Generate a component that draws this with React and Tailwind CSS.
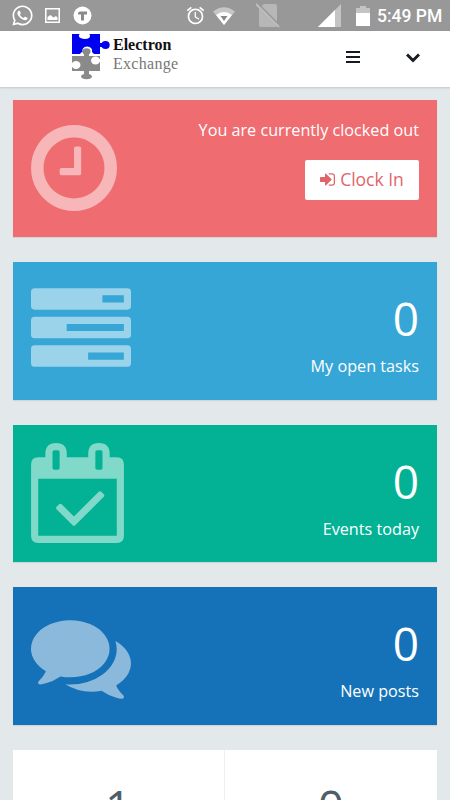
import React from "react";
import { FaWhatsapp } from "react-icons/fa";
import { MdAccessAlarm } from "react-icons/md";

const ClockIcon = () => (
  <svg className="h-[86px] w-[86px]" viewBox="128 128 1536 1536" fill="currentColor">
    <path d="M1024 544v448q0 14-9 23t-23 9h-320q-14 0-23-9t-9-23v-64q0-14 9-23t23-9h224v-352q0-14 9-23t23-9h64q14 0 23 9t9 23zm416 352q0-148-73-273t-198-198-273-73-273 73-198 198-73 273 73 273 198 198 273 73 273-73 198-198 73-273zm224 0q0 209-103 385.5t-279.5 279.5-385.5 103-385.5-103-279.5-279.5-103-385.5 103-385.5 279.5-279.5 385.5-103 385.5 103 279.5 279.5 103 385.5z" />
  </svg>
);

const TasksIcon = () => (
  <svg className="h-[79px] w-[100px]" viewBox="0 0 1792 1408" fill="currentColor" fillRule="evenodd">
    <path d="M64 0h1664q64 0 64 64v256q0 64-64 64H64q-64 0-64-64V64q0-64 64-64zM1280 128v128h384V128z" />
    <path d="M64 512h1664q64 0 64 64v256q0 64-64 64H64q-64 0-64-64V576q0-64 64-64zM640 640v128h1024V640z" />
    <path d="M64 1024h1664q64 0 64 64v256q0 64-64 64H64q-64 0-64-64v-256q0-64 64-64zM1024 1152v128h640v-128z" />
  </svg>
);

const CalendarIcon = () => (
  <svg className="h-[100px] w-[93px]" viewBox="0 0 1664 1792" fill="currentColor" fillRule="evenodd">
    <path d="M128 256h128v-64Q256 0 448 0t192 192v64h384v-64q0-192 192-192t192 192v64h128q128 0 128 128v1280q0 128-128 128H128q-128 0-128-128V384q0-128 128-128zM128 640v1024h1408V640zM416 128q-32 0-32 32v288q0 32 32 32h64q32 0 32-32V160q0-32-32-32zM1184 128q-32 0-32 32v288q0 32 32 32h64q32 0 32-32V160q0-32-32-32z" />
    <path d="M1303 964l-512 512q-10 9-23 9t-23-9l-288-288q-9-10-9-23t9-22l46-46q9-9 22-9t23 9l220 220 444-444q10-9 23-9t22 9l46 46q9 9 9 22t-9 23z" />
  </svg>
);

const CommentsIcon = () => (
  <svg className="h-[79px] w-[100px]" viewBox="0 256 1792 1408" fill="currentColor">
    <path d="M1408 768q0 139-94 257t-256.5 186.5-353.5 68.5q-86 0-176-16-124 88-278 128-36 9-86 16h-3q-11 0-20.5-8t-11.5-21q-1-3-1-6.5t.5-6.5 2-6l2.5-5 3.5-5.5 4-5 4.5-5 4-4.5q5-6 23-25t26-29.5 22.5-29 25-38.5 20.5-44q-124-72-195-177t-71-224q0-139 94-257t256.5-186.5 353.5-68.5 353.5 68.5 256.5 186.5 94 257zm384 256q0 120-71 224.5t-195 176.5q10 24 20.5 44t25 38.5 22.5 29 26 29.5 23 25q1 1 4 4.5t4.5 5 4 5 3.5 5.5l2.5 5 2 6 .5 6.5-1 6.5q-3 14-13 22t-22 7q-50-7-86-16-154-40-278-128-90 16-176 16-271 0-472-132 58 4 88 4 161 0 309-45t264-129q125-92 192-212t67-245q0-77-23-149 129 71 204 178t75 230z" />
  </svg>
);

const SignInIcon = () => (
  <svg className="h-[13px] w-[15px]" viewBox="128 256 1536 1280" fill="currentColor">
    <path d="M1312 896q0 26-19 45l-544 544q-19 19-45 19t-45-19-19-45v-288h-448q-26 0-45-19t-19-45v-384q0-26 19-45t45-19h448v-288q0-26 19-45t45-19 45 19l544 544q19 19 19 45zm352-352v704q0 119-84.5 203.5t-203.5 84.5h-320q-13 0-22.5-9.5t-9.5-22.5q0-4-1-20t-.5-26.5 3-23.5 10-19.5 20.5-6.5h320q66 0 113-47t47-113v-704q0-66-47-113t-113-47h-312l-11.5-1-11.5-3-8-5.5-7-9-2-13.5q0-4-1-20t-.5-26.5 3-23.5 10-19.5 20.5-6.5h320q119 0 203.5 84.5t84.5 203.5z" />
  </svg>
);

const Logo = () => (
  <svg className="h-[48px] w-[40px] shrink-0" viewBox="0 0 40 48">
    <g fill="#0000f0">
      <path d="M1 2h7.500q-2.500 4 4.500 5 8 0 5.500-5H29v20H1z" />
      <path d="M28 11h5v4h-5z" />
      <ellipse cx="34.500" cy="13" rx="4.200" ry="4" />
    </g>
    <path d="M9 22q1-2 2.500-2-1-5 4.500-5.500 6 .5 5 5.500l2 2v2H9z" fill="#fff" />
    <g fill="#8a8a8a">
      <path d="M1 24h12v-3h5v3h11v15H18v4h-5v-4H1z" />
      <ellipse cx="15.500" cy="19.500" rx="4" ry="3.300" />
      <ellipse cx="15.500" cy="44.500" rx="5.500" ry="2.800" />
    </g>
    <g fill="#fff">
      <ellipse cx="5" cy="33" rx="4.500" ry="4" />
      <ellipse cx="24.500" cy="28.500" rx="4.500" ry="4" />
      <path d="M0 32h3v3H0zM27 27h3v3h-3z" />
    </g>
  </svg>
);

const StatusBar = () => (
  <div className="flex h-[31px] items-center bg-[#989898] pl-[11px] text-white">
    <FaWhatsapp className="h-[23px] w-[23px]" />
    <svg className="ml-[11px] h-[15px] w-[15px]" viewBox="0 0 15 15">
      <path d="M.75.75h13.500v13.500H.75z" fill="none" stroke="currentColor" strokeWidth="1.500" />
      <path d="M2.500 12V9l3-2 3 2.500L11 8l1.500 1.500V12z" fill="currentColor" />
    </svg>
    <svg className="ml-[13px] h-[19px] w-[19px]" viewBox="0 0 19 19">
      <circle cx="9.500" cy="9.500" r="9" fill="currentColor" />
      <path d="M5 7.500q0-2 2-2h7v3h-3v6H8v-6H5z" fill="#8b8b8b" />
    </svg>
    <MdAccessAlarm className="ml-[93px] h-[21px] w-[21px]" />
    <svg className="ml-[7px] h-[18px] w-[22px]" viewBox="0 0 22 18">
      <path d="M0 4.500Q11-4 22 4.500L11 18z" fill="#c6c6c6" />
      <path d="M3 8Q11 2 19 8l-8 10z" fill="currentColor" />
      <path d="M7.500 9h7L11 14z" fill="#888" />
    </svg>
    <svg className="ml-[21px] h-[25px] w-[24px]" viewBox="0 0 24 25">
      <path d="M8 1h11q2 0 2 2v19q0 2-2 2H5q-2 0-2-2V6z" fill="#b7b7b7" />
      <path d="M2 1l21 21" stroke="#989898" strokeWidth="2" />
      <path d="M0 1l23 23" stroke="#bcbcbc" strokeWidth="2" />
    </svg>
    <svg className="ml-[38px] h-[23px] w-[23px]" viewBox="0 0 23 23">
      <path d="M23 0v23H0z" fill="#c4c4c4" />
      <path d="M17 6v17H0z" fill="currentColor" />
    </svg>
    <svg className="ml-[15px] h-[20px] w-[14px]" viewBox="0 0 14 20">
      <path d="M0 2h4V0h6v2h4v6H0z" fill="#c4c4c4" />
      <path d="M0 7h14v13H0z" fill="currentColor" />
    </svg>
    <span className="ml-[7px] pt-[2px] whitespace-nowrap font-['Roboto',sans-serif] text-[17.5px] leading-none font-medium">
      5:49 PM
    </span>
  </div>
);

const Navbar = () => (
  <div className="flex h-14 bg-white shadow-[0_1px_2px_rgba(0,0,0,0.15)]">
    <div className="ml-[71px] flex w-[275px] pt-px">
      <Logo />
      <div className="ml-[2px] pt-[3px] font-['Liberation_Serif',serif] text-[16px] leading-[19px]">
        <div className="font-bold text-[#111]">Electron</div>
        <div className="tracking-[0.3px] text-[#777]">Exchange</div>
      </div>
    </div>
    <svg className="mt-5 h-[12px] w-[14px]" viewBox="0 0 14 12">
      <path d="M0 1h14M0 6h14M0 11h14" stroke="#161a1e" strokeWidth="2" />
    </svg>
    <svg className="mt-[22px] ml-[46px] h-[10px] w-[14px]" viewBox="0 0 14 10">
      <path d="M1 1.500l6 6 6-6" fill="none" stroke="#161c22" strokeWidth="3" />
    </svg>
  </div>
);

const StatCard = ({ color, iconTop, icon, value, label }) => (
  <div className={`flex h-[137.5px] justify-between pr-[18px] pl-[18.5px] text-white shadow-[0_1px_1px_rgba(0,0,0,0.08)] ${color}`}>
    <div className={`text-white/50 ${iconTop}`}>{icon}</div>
    <div className="pt-[30px] text-right">
      <div className="text-[46px] leading-[52px]">{value}</div>
      <div className="mt-[10px] text-[16.2px] leading-6">{label}</div>
    </div>
  </div>
);

const stats = [
  { color: "bg-[#36a6d6]", iconTop: "pt-[25.5px]", icon: <TasksIcon />, value: 0, label: "My open tasks" },
  { color: "bg-[#03b294]", iconTop: "pt-[18px]", icon: <CalendarIcon />, value: 0, label: "Events today" },
  { color: "bg-[#1672b8]", iconTop: "pt-[32.5px]", icon: <CommentsIcon />, value: 0, label: "New posts" },
];

const App = () => {
  return (
    <div className="h-[800px] w-[450px] overflow-hidden bg-[#e3e8ea] font-['Open_Sans',sans-serif]">
      <StatusBar />
      <Navbar />
      <div className="flex flex-col gap-[25px] pt-[12.9px] pr-[13px] pl-[12.5px]">
        <div className="flex h-[137.5px] justify-between bg-[#ef6c71] pr-[18px] pl-[18.5px] text-white shadow-[0_1px_1px_rgba(0,0,0,0.08)]">
          <div className="pt-[25px] text-white/50">
            <ClockIcon />
          </div>
          <div className="flex flex-col items-end pt-[18px]">
            <div className="text-[16.2px] leading-6">You are currently clocked out</div>
            <button className="mt-[18px] flex h-10 w-[114px] items-center justify-center gap-[5px] rounded-[2px] bg-white text-[17.5px] text-[#e0656b]">
              <SignInIcon />
              <span className="leading-none">Clock In</span>
            </button>
          </div>
        </div>
        {stats.map((item) => (
          <StatCard key={item.label} {...item} />
        ))}
        <div className="flex h-[137.5px] bg-white text-center text-[46px] leading-[52px] text-[#4e5e6a]">
          <div className="w-1/2 border-r border-[#edf0f1] pt-[30px]">1</div>
          <div className="w-1/2 pt-[30px]">0</div>
        </div>
      </div>
    </div>
  );
};

export default App;
